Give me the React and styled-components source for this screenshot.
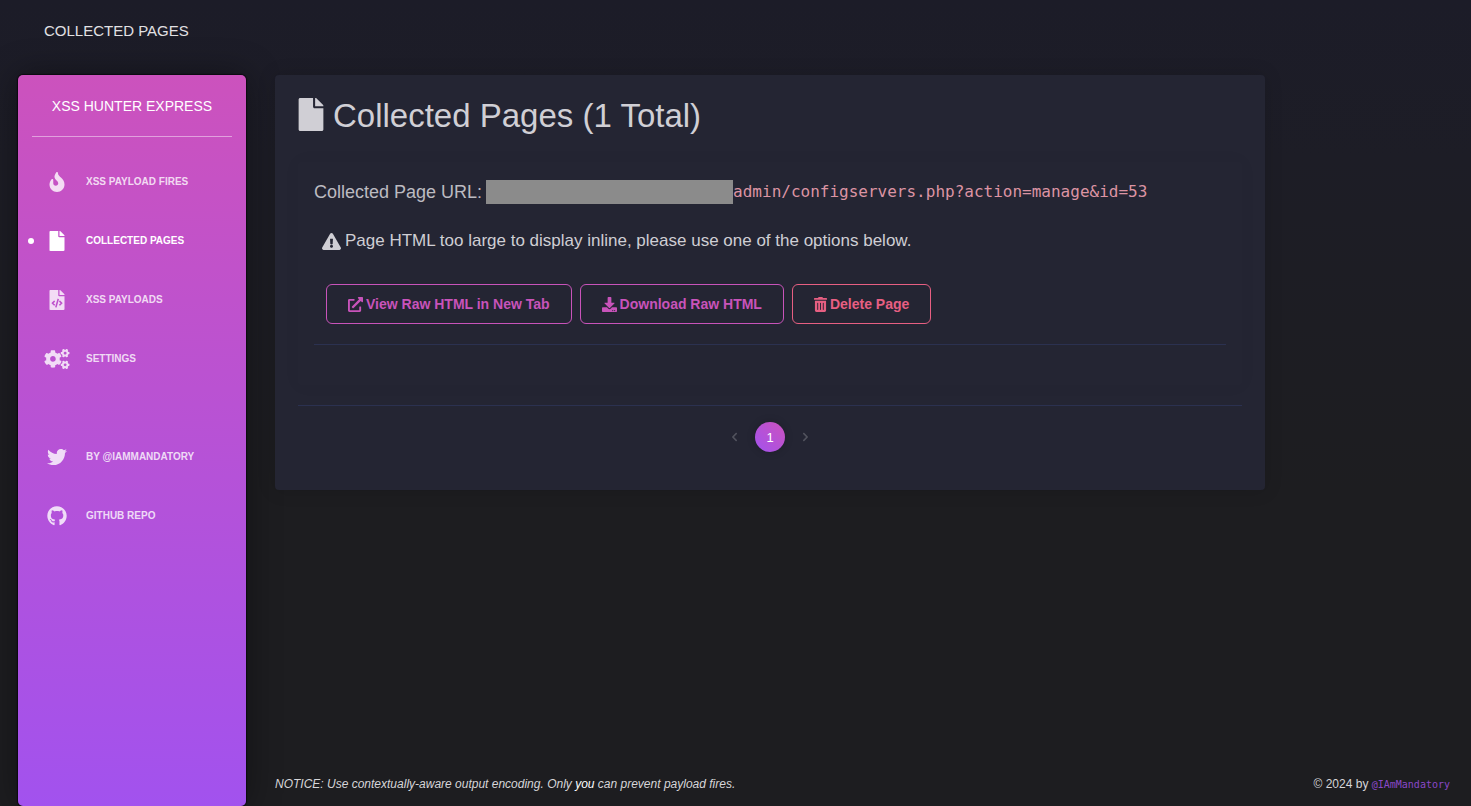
import React from "react";
import styled, { createGlobalStyle, css } from "styled-components";
import {
  FaFire,
  FaFile,
  FaFileCode,
  FaCogs,
  FaTwitter,
  FaGithub,
  FaExclamationTriangle,
  FaExternalLinkAlt,
  FaDownload,
  FaTrashAlt,
  FaChevronLeft,
  FaChevronRight,
} from "react-icons/fa";

const GlobalStyle = createGlobalStyle`
  * { box-sizing: border-box; }
  body {
    margin: 0;
    background: #1d1d20;
    color: #cfced4;
    font-family: "Liberation Sans", Arial, sans-serif;
    font-size: 14px;
  }
`;

const Page = styled.div`
  min-height: 100vh;
  display: flex;
  flex-direction: column;
  background: linear-gradient(#1c1c28 0, #1d1d26 160px, #1d1d20 490px);
`;

const TopBar = styled.header`
  height: 75px;
  padding: 20px 44px 0;
`;

const PageName = styled.a`
  color: #e2e1e4;
  font-size: 15px;
  line-height: 22px;
  text-decoration: none;
  text-transform: uppercase;
`;

const Body = styled.div`
  flex: 1;
  display: flex;
  gap: 29px;
  padding: 0 8px 0 18px;
`;

const Sidebar = styled.aside`
  width: 228px;
  flex: none;
  padding: 0 14px;
  border-radius: 5px;
  background: linear-gradient(#cc52bd, #a252ee);
  box-shadow: 0 0 1px 1px #0c0a10, 0 0 34px rgba(0, 0, 0, 0.4);
`;

const Brand = styled.h1`
  margin: 0;
  height: 62px;
  border-bottom: 1px solid rgba(255, 255, 255, 0.45);
  color: #fff;
  font-size: 14px;
  font-weight: 400;
  line-height: 62px;
  text-align: center;
`;

const NavList = styled.ul`
  list-style: none;
  margin: 0;
  padding: 15px 0 0;
`;

const NavItem = styled.li`
  height: 59px;
  margin-top: ${(p) => (p.$apart ? "39px" : "0")};
`;

const NavLink = styled.a`
  position: relative;
  display: flex;
  align-items: center;
  gap: 16px;
  height: 60px;
  padding-left: 12px;
  color: ${(p) => (p.$active ? "#fff" : "rgba(255, 255, 255, 0.8)")};
  font-size: 10px;
  font-weight: 700;
  line-height: 16px;
  text-decoration: none;
  text-transform: uppercase;

  svg {
    width: 26px;
    height: 20px;
  }

  ${(p) =>
    p.$active &&
    css`
      &::before {
        content: "";
        position: absolute;
        left: -4px;
        top: 27px;
        width: 6px;
        height: 6px;
        border-radius: 50%;
        background: #fff;
      }
    `}
`;

const Main = styled.main`
  flex: 1;
  display: flex;
  flex-direction: column;
  justify-content: space-between;
`;

const Card = styled.section`
  width: calc(100% * 10 / 12);
  padding: 23px 23px 38px;
  border-radius: 4px;
  background: #242533;
  box-shadow: 0 0 18px rgba(0, 0, 0, 0.15);
`;

const CardTitle = styled.h2`
  display: flex;
  align-items: flex-start;
  gap: 9px;
  margin: 0;
  color: #d0cfd5;
  font-size: 33px;
  font-weight: 400;
  line-height: 36px;

  svg {
    width: 26px;
    height: 33px;
  }
`;

const Entry = styled.article`
  margin: 28px 0 20px;
  padding: 16px 16px 40px;
  border-radius: 4px;
  box-shadow: 0 0 18px rgba(0, 0, 0, 0.04);
`;

const UrlLine = styled.p`
  display: flex;
  align-items: center;
  margin: 0;
  color: #bcbbc1;
  font-size: 18px;
  line-height: 28px;
`;

const Redacted = styled.span`
  width: 247px;
  height: 24px;
  margin-left: 4px;
  background: #8b8b8b;
`;

const Url = styled.code`
  color: #dc94a3;
  font-family: "DejaVu Sans Mono", monospace;
  font-size: 16px;
`;

const Warning = styled.p`
  display: flex;
  align-items: center;
  gap: 4px;
  margin: 22px 8px 0;
  color: #cfced4;
  font-size: 17px;
  line-height: 26px;

  svg {
    width: 19px;
    height: 17px;
  }
`;

const Actions = styled.div`
  display: flex;
  gap: 8px;
  padding: 30px 12px 20px;
`;

const Button = styled.button`
  display: flex;
  align-items: center;
  gap: 3px;
  height: 40px;
  padding: 0 21px;
  border: 1px solid currentColor;
  border-radius: 6px;
  background: transparent;
  color: ${(p) => (p.$danger ? "#e75f82" : "#c853ba")};
  font-family: inherit;
  font-size: 14px;
  font-weight: 700;

  svg {
    width: ${(p) => (p.$danger ? "13px" : "15px")};
    height: 15px;
  }
`;

const Rule = styled.hr`
  margin: 0;
  border: 0;
  border-top: 1px solid #2b3150;
`;

const Pager = styled.nav`
  display: flex;
  justify-content: center;
  align-items: center;
  gap: 16px;
  padding-top: 16px;
`;

const PageStep = styled.button`
  display: flex;
  padding: 0;
  border: 0;
  background: none;
  color: #51525d;

  svg {
    width: 9px;
    height: 10px;
  }
`;

const PageNumber = styled.button`
  width: 30px;
  height: 30px;
  padding: 0;
  border: 0;
  border-radius: 50%;
  background: linear-gradient(to bottom left, #cc52bd, #a252ee);
  color: #fff;
  font-family: inherit;
  font-size: 13px;
  box-shadow: 0 0 8px rgba(0, 0, 0, 0.2);
`;

const Footer = styled.footer`
  display: flex;
  justify-content: space-between;
  padding: 0 13px 12px 0;
  color: #d6d5d8;
  font-size: 12px;
  line-height: 18px;

  b {
    color: #fff;
    font-weight: 400;
  }
`;

const Handle = styled.a`
  color: #8a48c8;
  font-family: "DejaVu Sans Mono", monospace;
  font-size: 10px;
  text-decoration: none;
`;

const navigation = [
  { label: "XSS Payload Fires", Icon: FaFire },
  { label: "Collected Pages", Icon: FaFile, active: true },
  { label: "XSS Payloads", Icon: FaFileCode },
  { label: "Settings", Icon: FaCogs },
  { label: "By @IAmMandatory", Icon: FaTwitter, apart: true },
  { label: "GitHub Repo", Icon: FaGithub },
];

export default function App() {
  return (
    <Page>
      <GlobalStyle />
      <TopBar>
        <PageName href="#">Collected Pages</PageName>
      </TopBar>
      <Body>
        <Sidebar>
          <Brand>XSS HUNTER EXPRESS</Brand>
          <NavList>
            {navigation.map(({ label, Icon, active, apart }) => (
              <NavItem key={label} $apart={apart}>
                <NavLink href="#" $active={active}>
                  <Icon />
                  {label}
                </NavLink>
              </NavItem>
            ))}
          </NavList>
        </Sidebar>
        <Main>
          <Card>
            <CardTitle>
              <FaFile />
              Collected Pages (1 Total)
            </CardTitle>
            <Entry>
              <UrlLine>
                Collected Page URL:
                <Redacted />
                <Url>admin/configservers.php?action=manage&amp;id=53</Url>
              </UrlLine>
              <Warning>
                <FaExclamationTriangle />
                Page HTML too large to display inline, please use one of the options below.
              </Warning>
              <Actions>
                <Button type="button">
                  <FaExternalLinkAlt />
                  View Raw HTML in New Tab
                </Button>
                <Button type="button">
                  <FaDownload />
                  Download Raw HTML
                </Button>
                <Button type="button" $danger>
                  <FaTrashAlt />
                  Delete Page
                </Button>
              </Actions>
              <Rule />
            </Entry>
            <Rule />
            <Pager aria-label="Pages">
              <PageStep type="button" aria-label="Previous">
                <FaChevronLeft />
              </PageStep>
              <PageNumber type="button">1</PageNumber>
              <PageStep type="button" aria-label="Next">
                <FaChevronRight />
              </PageStep>
            </Pager>
          </Card>
          <Footer>
            <em>
              NOTICE: Use contextually-aware output encoding. Only <b>you</b> can prevent payload fires.
            </em>
            <span>
              © 2024 by <Handle href="#">@IAmMandatory</Handle>
            </span>
          </Footer>
        </Main>
      </Body>
    </Page>
  );
}
